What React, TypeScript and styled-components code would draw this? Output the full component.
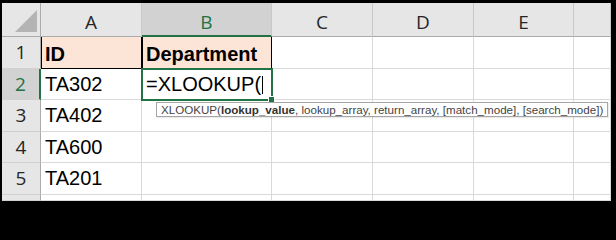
import React from "react";
import styled, { createGlobalStyle, css } from "styled-components";

const GREEN = "#217346";

const GlobalStyle = createGlobalStyle`
  html, body {
    margin: 0;
    padding: 0;
    background: #000;
  }
`;

const Frame = styled.div`
  width: 616px;
  height: 204px;
  box-sizing: border-box;
  padding: 3px 5px 3px 2px;
  background: #000;
`;

const Sheet = styled.div`
  display: grid;
  grid-template-columns: 39px 101px 130px 101px 101px 100px 1fr;
  grid-template-rows: 34px 32px 31px 32px 31px 32px 1fr;
  height: 100%;
  background: #fff;
  overflow: hidden;
  font-family: "Liberation Sans", Arial, sans-serif;
  color: #000;
`;

const HeaderBase = styled.div`
  box-sizing: border-box;
  background: #e6e6e6;
  color: #262626;
  font-family: "Open Sans", "Liberation Sans", sans-serif;
  font-size: 19px;
`;

const Corner = styled(HeaderBase)`
  border-right: 1px solid #ababab;
  border-bottom: 1px solid #ababab;
  display: flex;
  align-items: flex-end;
  justify-content: flex-end;
  padding: 0 3px 4px 0;

  & > svg {
    display: block;
  }
`;

const ColHeader = styled(HeaderBase)<{ $active?: boolean }>`
  display: flex;
  justify-content: center;
  align-items: flex-end;
  line-height: 24px;
  padding-bottom: 2px;
  border-right: 1px solid #c8c8c8;
  border-bottom: 1px solid #ababab;
  ${(p) =>
    p.$active &&
    css`
      background: #d2d2d2;
      color: ${GREEN};
      border-bottom: 2px solid ${GREEN};
      padding-bottom: 1px;
    `}
`;

const RowHeader = styled(HeaderBase)<{ $active?: boolean }>`
  display: flex;
  justify-content: center;
  align-items: flex-start;
  line-height: 24px;
  padding-top: 3px;
  border-right: 1px solid #ababab;
  border-bottom: 1px solid #d0d0d0;
  ${(p) =>
    p.$active &&
    css`
      background: #d2d2d2;
      color: ${GREEN};
      border-right: 2px solid ${GREEN};
    `}
`;

const Cell = styled.div<{ $title?: boolean; $active?: boolean }>`
  position: relative;
  box-sizing: border-box;
  display: flex;
  align-items: flex-start;
  padding: 4px 0 0 4px;
  font-size: 20px;
  line-height: 23px;
  white-space: nowrap;
  border-right: 1px solid #d9d9d9;
  border-bottom: 1px solid #d9d9d9;
  ${(p) =>
    p.$title &&
    css`
      background: #fce4d6;
      font-weight: bold;
      border-right-color: #000;
      border-bottom-color: #000;
      box-shadow: inset 1px 0 0 #000;
      padding-top: 6px;
    `}
  ${(p) =>
    p.$active &&
    css`
      z-index: 1;
      outline: 2px solid ${GREEN};
      outline-offset: -1px;

      &::after {
        content: "";
        position: absolute;
        right: -4px;
        bottom: -4px;
        width: 5px;
        height: 5px;
        background: ${GREEN};
        border: 1px solid #fff;
      }
    `}
`;

const Caret = styled.span`
  display: inline-block;
  width: 1px;
  height: 18px;
  margin: 3px 0 0 1px;
  background: #000;
`;

const Tooltip = styled.div`
  position: absolute;
  top: calc(100% + 3px);
  left: 14px;
  z-index: 2;
  box-sizing: border-box;
  height: 15px;
  padding: 0 4px;
  background: #fff;
  border: 1px solid #a6a6a6;
  box-shadow: 1px 1px 1px rgba(0, 0, 0, 0.08);
  font-family: "Liberation Sans", Arial, sans-serif;
  font-size: 11.6px;
  font-weight: normal;
  line-height: 13px;
  color: #444;

  & > b {
    color: #333;
  }
`;

const columns = ["A", "B", "C", "D", "E", ""];

const rows: string[][] = [
  ["ID", "Department"],
  ["TA302", ""],
  ["TA402"],
  ["TA600"],
  ["TA201"],
  [],
];

function CornerTriangle() {
  return (
    <svg width="22" height="22" viewBox="0 0 22 22">
      <polygon points="22,0 22,22 0,22" fill="#b4b4b4" />
    </svg>
  );
}

export default function App() {
  return (
    <>
      <GlobalStyle />
      <Frame>
        <Sheet>
          <Corner>
            <CornerTriangle />
          </Corner>
          {columns.map((c, i) => (
            <ColHeader key={"h" + i} $active={c === "B"}>
              {c}
            </ColHeader>
          ))}
          {rows.map((row, r) => (
            <React.Fragment key={r}>
              <RowHeader $active={r === 1}>{r < 5 ? r + 1 : ""}</RowHeader>
              {columns.map((_, c) => {
                const isTitle = r === 0 && c < 2;
                const isActive = r === 1 && c === 1;
                return (
                  <Cell key={c} $title={isTitle} $active={isActive}>
                    {isActive ? (
                      <>
                        =XLOOKUP(
                        <Caret />
                        <Tooltip>
                          XLOOKUP(<b>lookup_value</b>, lookup_array,
                          return_array, [match_mode], [search_mode])
                        </Tooltip>
                      </>
                    ) : (
                      row[c] ?? ""
                    )}
                  </Cell>
                );
              })}
            </React.Fragment>
          ))}
        </Sheet>
      </Frame>
    </>
  );
}
